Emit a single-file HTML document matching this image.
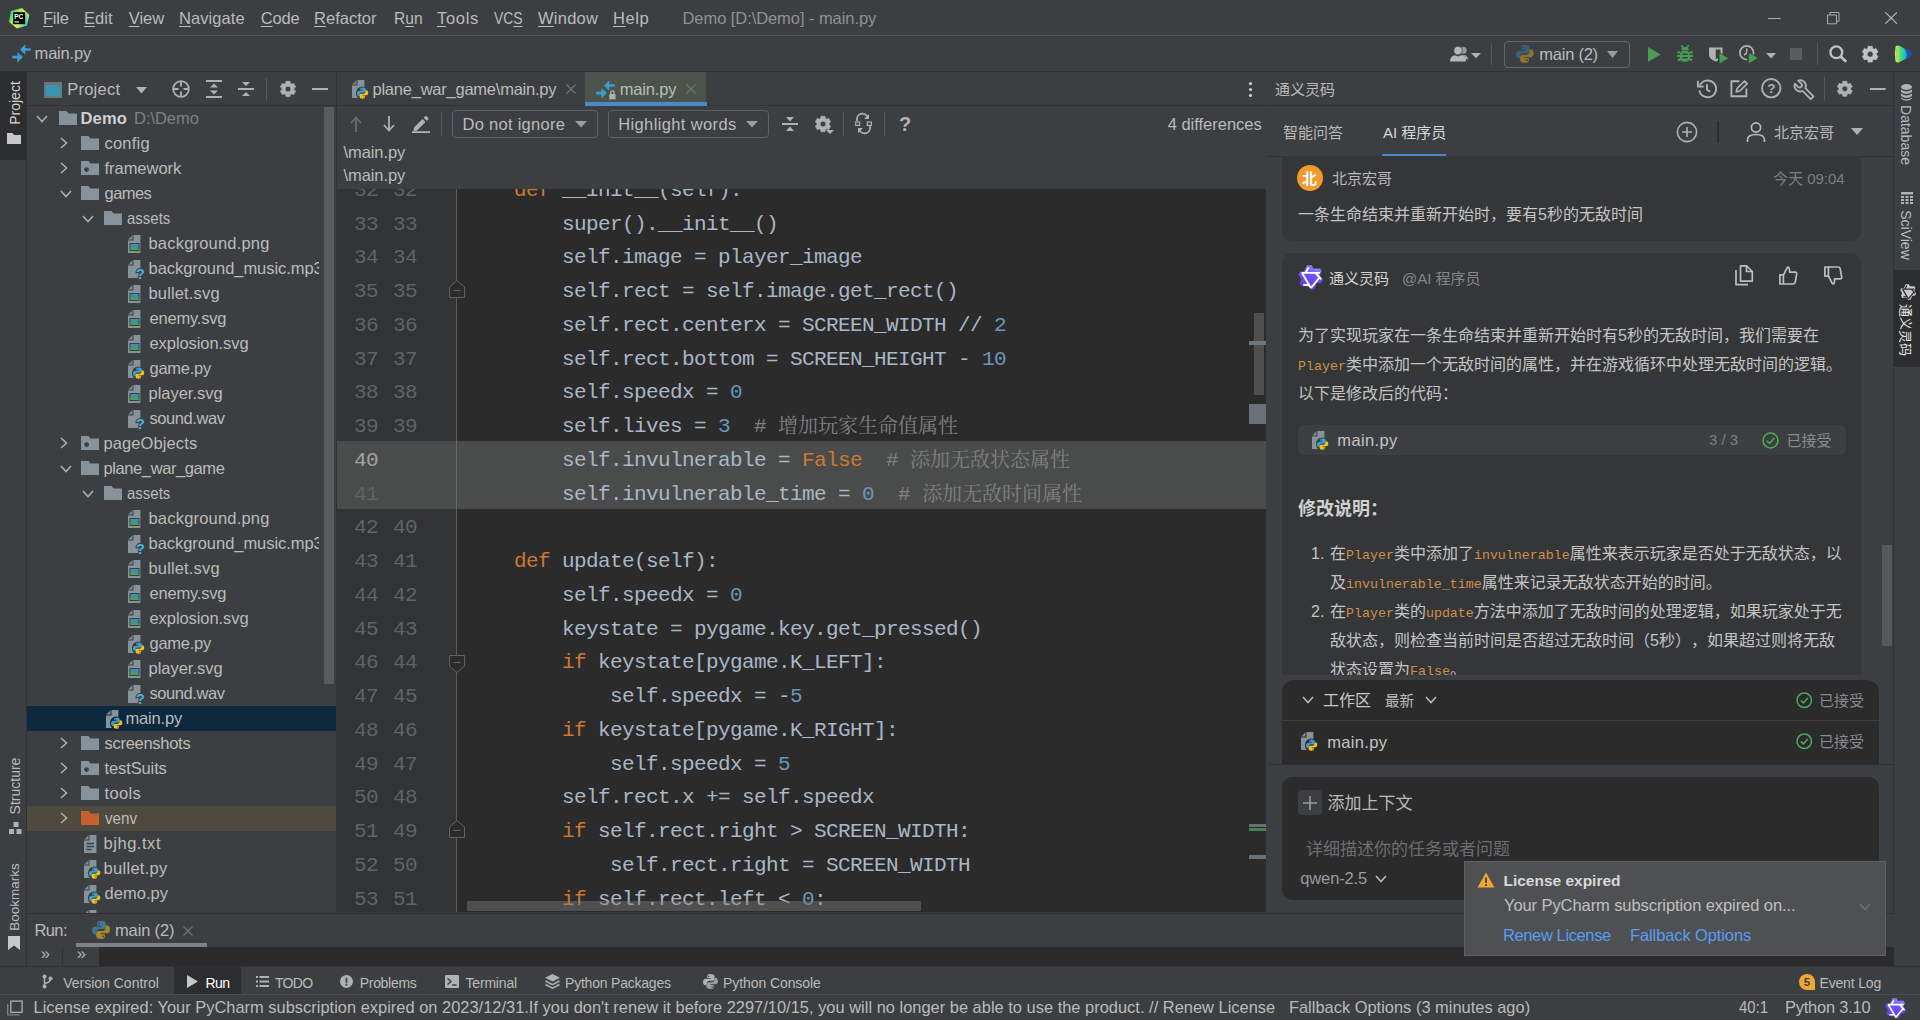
<!DOCTYPE html>
<html lang="zh"><head><meta charset="utf-8"><title>Demo - main.py</title>
<style>
*{box-sizing:border-box;margin:0;padding:0}
html,body{width:1920px;height:1020px;overflow:hidden;background:#3c3f41}
body{position:relative;font-family:"Liberation Sans","Noto Sans CJK SC",sans-serif;font-size:16.5px;color:#bbbbbb;-webkit-font-smoothing:antialiased;text-spacing-trim:space-all}
.abs{position:absolute}
.t{position:absolute;white-space:nowrap;line-height:20px;height:20px}
.hl{position:absolute;height:1px}
.vl{position:absolute;width:1px}
u{text-decoration:underline;text-underline-offset:2px;text-decoration-thickness:1px}
.mono{font-family:"Liberation Mono","Noto Serif CJK SC",monospace}
.code{position:absolute;left:467px;white-space:pre;font-family:"Liberation Mono","Noto Serif CJK SC",monospace;font-size:21px;letter-spacing:-0.6px;line-height:34px;height:34px;color:#a9b7c6}
.ln{position:absolute;white-space:pre;font-family:"Liberation Mono",monospace;font-size:21px;letter-spacing:-0.6px;line-height:34px;height:34px;color:#606366}
.kw{color:#cc7832}.nu{color:#6897bb}.cm{color:#808080}.cm i{font-style:normal;font-size:20px;letter-spacing:0;position:relative;top:1px}
.cjk{font-family:"Liberation Sans","Noto Sans CJK SC",sans-serif}
.row{position:absolute;left:27px;width:309px;height:25px}

.oc{color:#d0904a;font-family:"Liberation Mono",monospace;font-size:13.3px}
svg{position:absolute;overflow:visible}
</style></head><body>
<div class="abs" style="left:0px;top:72px;width:27px;height:894px;background:#3c3f41;"></div>
<div class="abs" style="left:0px;top:72px;width:26px;height:88px;background:#2b2d2e;"></div>
<div class="abs" style="left:26px;top:72px;width:1px;height:894px;background:#323232;"></div>
<div class="abs" style="left:14.5px;top:103px;width:0;height:0"><div style="position:absolute;white-space:nowrap;transform:translate(-50%,-50%) rotate(-90deg);font-size:14px;line-height:18px;color:#d4d4d4">Project</div></div>
<svg style="left:7px;top:133px" width="14" height="11" viewBox="0 0 14 11"><path d="M0 0H5.5L7 2H14V11H0Z" fill="#c8c8c8"/></svg>
<div class="abs" style="left:14.8px;top:786px;width:0;height:0"><div style="position:absolute;white-space:nowrap;transform:translate(-50%,-50%) rotate(-90deg);font-size:14px;line-height:18px;color:#bbbbbb">Structure</div></div>
<svg style="left:9px;top:822px" width="13" height="12" viewBox="0 0 13 12"><rect x="4.5" y="0" width="5" height="5" fill="#afb1b3"/><rect x="0" y="7" width="5" height="5" fill="#afb1b3"/><rect x="7.5" y="7" width="5" height="5" fill="#afb1b3"/></svg>
<div class="abs" style="left:14.8px;top:896.5px;width:0;height:0"><div style="position:absolute;white-space:nowrap;transform:translate(-50%,-50%) rotate(-90deg);font-size:13.5px;line-height:18px;color:#bbbbbb">Bookmarks</div></div>
<svg style="left:8px;top:936px" width="12" height="14" viewBox="0 0 12 14"><path d="M0 0H12V14L6 9.5L0 14Z" fill="#c8c8c8"/></svg>
<div class="abs" style="left:27px;top:105px;width:309px;height:1px;background:#323232;"></div>
<svg style="left:44px;top:82px" width="18" height="16" viewBox="0 0 18 16"><rect x="0.75" y="0.75" width="16.5" height="14.5" fill="#3d91b3" stroke="#6d7478" stroke-width="1.5"/><rect x="0" y="0" width="18" height="3" fill="#6d7478"/></svg>
<div class="t" style="left:67.2px;top:79px;letter-spacing:0.239px;font-size:16.5px">Project</div>
<svg style="left:135.5px;top:87px" width="11" height="6.5" viewBox="0 0 11 6.5"><path d="M0 0H11L5.5 6.5Z" fill="#afb1b3"/></svg>
<svg style="left:172px;top:80px" width="18" height="18" viewBox="0 0 18 18"><circle cx="9" cy="9" r="7.8" fill="none" stroke="#afb1b3" stroke-width="1.8"/><path d="M9 1V6.5M9 11.5V17M1 9H6.5M11.5 9H17" stroke="#afb1b3" stroke-width="1.8"/></svg>
<svg style="left:206px;top:80px" width="16" height="18" viewBox="0 0 16 18"><rect x="0" y="0" width="16" height="2" fill="#afb1b3"/><rect x="0" y="16" width="16" height="2" fill="#afb1b3"/><path d="M8 3.5L12 7.5H4Z M8 14.5L12 10.5H4Z" fill="#afb1b3"/></svg>
<svg style="left:238px;top:80px" width="16" height="18" viewBox="0 0 16 18"><rect x="0" y="8" width="16" height="2" fill="#afb1b3"/><path d="M8 6L12 2H4Z M8 12L12 16H4Z" fill="#afb1b3"/></svg>
<div class="abs" style="left:266px;top:78px;width:1px;height:23px;background:#555759;"></div>
<svg style="left:280px;top:81px" width="16" height="16" viewBox="0 0 16 16"><path d="M5.73 2.27L5.93 0.27L10.07 0.27L10.27 2.27L11.83 3.17L13.66 2.34L15.73 5.93L14.09 7.10L14.09 8.90L15.73 10.07L13.66 13.66L11.83 12.83L10.27 13.73L10.07 15.73L5.93 15.73L5.73 13.73L4.17 12.83L2.34 13.66L0.27 10.07L1.91 8.90L1.91 7.10L0.27 5.93L2.34 2.34L4.17 3.17ZM5.16 8.00a2.84 2.84 0 1 0 5.68 0a2.84 2.84 0 1 0 -5.68 0Z" fill="#afb1b3" fill-rule="evenodd" stroke="#afb1b3" stroke-width="0.6" stroke-linejoin="round"/></svg>
<svg style="left:312px;top:88px" width="16" height="2" viewBox="0 0 16 2"><rect width="16" height="2" fill="#afb1b3"/></svg>
<div class="abs" style="left:336px;top:72px;width:1px;height:841px;background:#323232;"></div>
<svg style="left:35.7px;top:114.5px" width="12" height="8" viewBox="0 0 12 8"><path d="M1 1L6 6.5L11 1" fill="none" stroke="#adadad" stroke-width="1.6"/></svg>
<svg style="left:59px;top:110.7px" width="18" height="14" viewBox="0 0 18 14"><path d="M0 0H7.5L9.5 2.5H18V14H0Z" fill="#87939a"/></svg>
<div class="t" style="left:80.5px;top:108px;letter-spacing:0.179px;font-size:16.5px;color:#d0d0d0"><b>Demo</b></div>
<div class="t" style="left:134px;top:108px;letter-spacing:-0.037px;font-size:16.5px;color:#7f8183">D:\Demo</div>
<svg style="left:59.8px;top:137px" width="8" height="12" viewBox="0 0 8 12"><path d="M1 1L6.5 6L1 11" fill="none" stroke="#adadad" stroke-width="1.6"/></svg>
<svg style="left:81px;top:135.7px" width="18" height="14" viewBox="0 0 18 14"><path d="M0 0H7.5L9.5 2.5H18V14H0Z" fill="#87939a"/></svg>
<div class="t" style="left:104.5px;top:133px;letter-spacing:0.209px;font-size:16.5px">config</div>
<svg style="left:59.8px;top:162px" width="8" height="12" viewBox="0 0 8 12"><path d="M1 1L6.5 6L1 11" fill="none" stroke="#adadad" stroke-width="1.6"/></svg>
<svg style="left:81px;top:160.7px" width="18" height="14" viewBox="0 0 18 14"><path d="M0 0H7.5L9.5 2.5H18V14H0Z" fill="#87939a"/><circle cx="5.6" cy="8.6" r="2.4" fill="#3c3f41"/></svg>
<div class="t" style="left:104.5px;top:158px;letter-spacing:-0.033px;font-size:16.5px">framework</div>
<svg style="left:59.5px;top:189.5px" width="12" height="8" viewBox="0 0 12 8"><path d="M1 1L6 6.5L11 1" fill="none" stroke="#adadad" stroke-width="1.6"/></svg>
<svg style="left:81px;top:185.7px" width="18" height="14" viewBox="0 0 18 14"><path d="M0 0H7.5L9.5 2.5H18V14H0Z" fill="#87939a"/></svg>
<div class="t" style="left:104.5px;top:183px;letter-spacing:-0.544px;font-size:16.5px">games</div>
<svg style="left:81.5px;top:214.5px" width="12" height="8" viewBox="0 0 12 8"><path d="M1 1L6 6.5L11 1" fill="none" stroke="#adadad" stroke-width="1.6"/></svg>
<svg style="left:104px;top:210.7px" width="18" height="14" viewBox="0 0 18 14"><path d="M0 0H7.5L9.5 2.5H18V14H0Z" fill="#87939a"/></svg>
<div class="t" style="left:126.5px;top:208px;transform:scaleX(0.9086);transform-origin:0 0;font-size:16.5px">assets</div>
<svg style="left:128px;top:234.5px" width="13" height="18" viewBox="0 0 13 18"><path d="M5.5 0H12.4V18H0V5.5Z" fill="#87939b"/><path d="M0 5.500L5.500 0V5.500Z" fill="#3c3f41"/><path d="M0.300 4.500L4.500 0.300V4.500Z" fill="#7e8991"/><rect x="1.5" y="8" width="10" height="8" fill="#3c3f41"/><rect x="2.5" y="9" width="8" height="6" fill="#3c8fb5"/><path d="M2.5 15V12.5Q5 10.5 7 12.5T10.5 13V15Z" fill="#4f9f49"/></svg>
<div class="t" style="left:148.5px;top:233px;letter-spacing:0.195px;font-size:16.5px">background.png</div>
<svg style="left:128px;top:259.5px" width="13" height="18" viewBox="0 0 13 18"><path d="M5.5 0H12.4V18H0V5.5Z" fill="#87939b"/><path d="M0 5.500L5.500 0V5.500Z" fill="#3c3f41"/><path d="M0.300 4.500L4.500 0.300V4.500Z" fill="#7e8991"/><text x="8.100" y="19" font-family="Liberation Sans,sans-serif" font-weight="bold" font-size="14.500" fill="#40b6e0" stroke="#3c3f41" stroke-width="2.200" paint-order="stroke">?</text></svg>
<div class="t" style="left:148.5px;top:258px;letter-spacing:-0.047px;font-size:16.5px;width:170px;overflow:hidden">background_music.mp3</div>
<svg style="left:128px;top:284.5px" width="13" height="18" viewBox="0 0 13 18"><path d="M5.5 0H12.4V18H0V5.5Z" fill="#87939b"/><path d="M0 5.500L5.500 0V5.500Z" fill="#3c3f41"/><path d="M0.300 4.500L4.500 0.300V4.500Z" fill="#7e8991"/><rect x="1.5" y="8" width="10" height="8" fill="#3c3f41"/><rect x="2.5" y="9" width="8" height="6" fill="#3c8fb5"/><path d="M2.5 15V12.5Q5 10.5 7 12.5T10.5 13V15Z" fill="#4f9f49"/></svg>
<div class="t" style="left:148.5px;top:283px;letter-spacing:0.152px;font-size:16.5px">bullet.svg</div>
<svg style="left:128px;top:309.5px" width="13" height="18" viewBox="0 0 13 18"><path d="M5.5 0H12.4V18H0V5.5Z" fill="#87939b"/><path d="M0 5.500L5.500 0V5.500Z" fill="#3c3f41"/><path d="M0.300 4.500L4.500 0.300V4.500Z" fill="#7e8991"/><rect x="1.5" y="8" width="10" height="8" fill="#3c3f41"/><rect x="2.5" y="9" width="8" height="6" fill="#3c8fb5"/><path d="M2.5 15V12.5Q5 10.5 7 12.5T10.5 13V15Z" fill="#4f9f49"/></svg>
<div class="t" style="left:149.5px;top:308px;letter-spacing:-0.198px;font-size:16.5px">enemy.svg</div>
<svg style="left:128px;top:334.5px" width="13" height="18" viewBox="0 0 13 18"><path d="M5.5 0H12.4V18H0V5.5Z" fill="#87939b"/><path d="M0 5.500L5.500 0V5.500Z" fill="#3c3f41"/><path d="M0.300 4.500L4.500 0.300V4.500Z" fill="#7e8991"/><rect x="1.5" y="8" width="10" height="8" fill="#3c3f41"/><rect x="2.5" y="9" width="8" height="6" fill="#3c8fb5"/><path d="M2.5 15V12.5Q5 10.5 7 12.5T10.5 13V15Z" fill="#4f9f49"/></svg>
<div class="t" style="left:149.5px;top:333px;letter-spacing:-0.075px;font-size:16.5px">explosion.svg</div>
<svg style="left:128px;top:359.5px" width="17" height="20" viewBox="0 0 17 20"><path d="M5.5 0H12.4V18H0V5.5Z" fill="#87939b"/><path d="M0 5.500L5.500 0V5.500Z" fill="#3c3f41"/><path d="M0.300 4.500L4.500 0.300V4.500Z" fill="#7e8991"/><circle cx="10.5" cy="13" r="6.6" fill="#3c3f41"/><g transform="translate(5,7.5) scale(0.94)"><path d="M5.9 0C3.6 0 3.4 1 3.4 1.8V3.2H6.1V3.8H2C0.8 3.8 0 4.8 0 6.4S0.8 9 2 9H3V7.4C3 6.3 3.9 5.4 5 5.4H7.6C8.5 5.4 9.2 4.7 9.2 3.8V1.8C9.2 0.8 8.3 0 5.9 0Z" fill="#3b9fd6"/><path d="M6.1 12C8.4 12 8.6 11 8.6 10.2V8.8H5.9V8.2H10C11.2 8.2 12 7.2 12 5.6S11.2 3 10 3H9V4.6C9 5.7 8.1 6.6 7 6.6H4.4C3.5 6.6 2.8 7.3 2.8 8.2V10.2C2.8 11.2 3.7 12 6.1 12Z" fill="#f2c21b"/><circle cx="4.6" cy="1.7" r="0.6" fill="#3c3f41"/><circle cx="7.4" cy="10.3" r="0.6" fill="#3c3f41"/></g></svg>
<div class="t" style="left:149.5px;top:358px;letter-spacing:-0.256px;font-size:16.5px">game.py</div>
<svg style="left:128px;top:384.5px" width="13" height="18" viewBox="0 0 13 18"><path d="M5.5 0H12.4V18H0V5.5Z" fill="#87939b"/><path d="M0 5.500L5.500 0V5.500Z" fill="#3c3f41"/><path d="M0.300 4.500L4.500 0.300V4.500Z" fill="#7e8991"/><rect x="1.5" y="8" width="10" height="8" fill="#3c3f41"/><rect x="2.5" y="9" width="8" height="6" fill="#3c8fb5"/><path d="M2.5 15V12.5Q5 10.5 7 12.5T10.5 13V15Z" fill="#4f9f49"/></svg>
<div class="t" style="left:148.5px;top:383px;letter-spacing:-0.024px;font-size:16.5px">player.svg</div>
<svg style="left:128px;top:409.5px" width="13" height="18" viewBox="0 0 13 18"><path d="M5.5 0H12.4V18H0V5.5Z" fill="#87939b"/><path d="M0 5.500L5.500 0V5.500Z" fill="#3c3f41"/><path d="M0.300 4.500L4.500 0.300V4.500Z" fill="#7e8991"/><text x="8.100" y="19" font-family="Liberation Sans,sans-serif" font-weight="bold" font-size="14.500" fill="#40b6e0" stroke="#3c3f41" stroke-width="2.200" paint-order="stroke">?</text></svg>
<div class="t" style="left:149.5px;top:408px;letter-spacing:-0.429px;font-size:16.5px">sound.wav</div>
<svg style="left:59.8px;top:437px" width="8" height="12" viewBox="0 0 8 12"><path d="M1 1L6.5 6L1 11" fill="none" stroke="#adadad" stroke-width="1.6"/></svg>
<svg style="left:81px;top:435.7px" width="18" height="14" viewBox="0 0 18 14"><path d="M0 0H7.5L9.5 2.5H18V14H0Z" fill="#87939a"/><circle cx="5.6" cy="8.6" r="2.4" fill="#3c3f41"/></svg>
<div class="t" style="left:103.5px;top:433px;letter-spacing:0.101px;font-size:16.5px">pageObjects</div>
<svg style="left:59.5px;top:464.5px" width="12" height="8" viewBox="0 0 12 8"><path d="M1 1L6 6.5L11 1" fill="none" stroke="#adadad" stroke-width="1.6"/></svg>
<svg style="left:81px;top:460.7px" width="18" height="14" viewBox="0 0 18 14"><path d="M0 0H7.5L9.5 2.5H18V14H0Z" fill="#87939a"/></svg>
<div class="t" style="left:103.5px;top:458px;letter-spacing:-0.401px;font-size:16.5px">plane_war_game</div>
<svg style="left:81.5px;top:489.5px" width="12" height="8" viewBox="0 0 12 8"><path d="M1 1L6 6.5L11 1" fill="none" stroke="#adadad" stroke-width="1.6"/></svg>
<svg style="left:104px;top:485.7px" width="18" height="14" viewBox="0 0 18 14"><path d="M0 0H7.5L9.5 2.5H18V14H0Z" fill="#87939a"/></svg>
<div class="t" style="left:126.5px;top:483px;transform:scaleX(0.9086);transform-origin:0 0;font-size:16.5px">assets</div>
<svg style="left:128px;top:509.5px" width="13" height="18" viewBox="0 0 13 18"><path d="M5.5 0H12.4V18H0V5.5Z" fill="#87939b"/><path d="M0 5.500L5.500 0V5.500Z" fill="#3c3f41"/><path d="M0.300 4.500L4.500 0.300V4.500Z" fill="#7e8991"/><rect x="1.5" y="8" width="10" height="8" fill="#3c3f41"/><rect x="2.5" y="9" width="8" height="6" fill="#3c8fb5"/><path d="M2.5 15V12.5Q5 10.5 7 12.5T10.5 13V15Z" fill="#4f9f49"/></svg>
<div class="t" style="left:148.5px;top:508px;letter-spacing:0.195px;font-size:16.5px">background.png</div>
<svg style="left:128px;top:534.5px" width="13" height="18" viewBox="0 0 13 18"><path d="M5.5 0H12.4V18H0V5.5Z" fill="#87939b"/><path d="M0 5.500L5.500 0V5.500Z" fill="#3c3f41"/><path d="M0.300 4.500L4.500 0.300V4.500Z" fill="#7e8991"/><text x="8.100" y="19" font-family="Liberation Sans,sans-serif" font-weight="bold" font-size="14.500" fill="#40b6e0" stroke="#3c3f41" stroke-width="2.200" paint-order="stroke">?</text></svg>
<div class="t" style="left:148.5px;top:533px;letter-spacing:-0.047px;font-size:16.5px;width:170px;overflow:hidden">background_music.mp3</div>
<svg style="left:128px;top:559.5px" width="13" height="18" viewBox="0 0 13 18"><path d="M5.5 0H12.4V18H0V5.5Z" fill="#87939b"/><path d="M0 5.500L5.500 0V5.500Z" fill="#3c3f41"/><path d="M0.300 4.500L4.500 0.300V4.500Z" fill="#7e8991"/><rect x="1.5" y="8" width="10" height="8" fill="#3c3f41"/><rect x="2.5" y="9" width="8" height="6" fill="#3c8fb5"/><path d="M2.5 15V12.5Q5 10.5 7 12.5T10.5 13V15Z" fill="#4f9f49"/></svg>
<div class="t" style="left:148.5px;top:558px;letter-spacing:0.152px;font-size:16.5px">bullet.svg</div>
<svg style="left:128px;top:584.5px" width="13" height="18" viewBox="0 0 13 18"><path d="M5.5 0H12.4V18H0V5.5Z" fill="#87939b"/><path d="M0 5.500L5.500 0V5.500Z" fill="#3c3f41"/><path d="M0.300 4.500L4.500 0.300V4.500Z" fill="#7e8991"/><rect x="1.5" y="8" width="10" height="8" fill="#3c3f41"/><rect x="2.5" y="9" width="8" height="6" fill="#3c8fb5"/><path d="M2.5 15V12.5Q5 10.5 7 12.5T10.5 13V15Z" fill="#4f9f49"/></svg>
<div class="t" style="left:149.5px;top:583px;letter-spacing:-0.198px;font-size:16.5px">enemy.svg</div>
<svg style="left:128px;top:609.5px" width="13" height="18" viewBox="0 0 13 18"><path d="M5.5 0H12.4V18H0V5.5Z" fill="#87939b"/><path d="M0 5.500L5.500 0V5.500Z" fill="#3c3f41"/><path d="M0.300 4.500L4.500 0.300V4.500Z" fill="#7e8991"/><rect x="1.5" y="8" width="10" height="8" fill="#3c3f41"/><rect x="2.5" y="9" width="8" height="6" fill="#3c8fb5"/><path d="M2.5 15V12.5Q5 10.5 7 12.5T10.5 13V15Z" fill="#4f9f49"/></svg>
<div class="t" style="left:149.5px;top:608px;letter-spacing:-0.075px;font-size:16.5px">explosion.svg</div>
<svg style="left:128px;top:634.5px" width="17" height="20" viewBox="0 0 17 20"><path d="M5.5 0H12.4V18H0V5.5Z" fill="#87939b"/><path d="M0 5.500L5.500 0V5.500Z" fill="#3c3f41"/><path d="M0.300 4.500L4.500 0.300V4.500Z" fill="#7e8991"/><circle cx="10.5" cy="13" r="6.6" fill="#3c3f41"/><g transform="translate(5,7.5) scale(0.94)"><path d="M5.9 0C3.6 0 3.4 1 3.4 1.8V3.2H6.1V3.8H2C0.8 3.8 0 4.8 0 6.4S0.8 9 2 9H3V7.4C3 6.3 3.9 5.4 5 5.4H7.6C8.5 5.4 9.2 4.7 9.2 3.8V1.8C9.2 0.8 8.3 0 5.9 0Z" fill="#3b9fd6"/><path d="M6.1 12C8.4 12 8.6 11 8.6 10.2V8.8H5.9V8.2H10C11.2 8.2 12 7.2 12 5.6S11.2 3 10 3H9V4.6C9 5.7 8.1 6.6 7 6.6H4.4C3.5 6.6 2.8 7.3 2.8 8.2V10.2C2.8 11.2 3.7 12 6.1 12Z" fill="#f2c21b"/><circle cx="4.6" cy="1.7" r="0.6" fill="#3c3f41"/><circle cx="7.4" cy="10.3" r="0.6" fill="#3c3f41"/></g></svg>
<div class="t" style="left:149.5px;top:633px;letter-spacing:-0.256px;font-size:16.5px">game.py</div>
<svg style="left:128px;top:659.5px" width="13" height="18" viewBox="0 0 13 18"><path d="M5.5 0H12.4V18H0V5.5Z" fill="#87939b"/><path d="M0 5.500L5.500 0V5.500Z" fill="#3c3f41"/><path d="M0.300 4.500L4.500 0.300V4.500Z" fill="#7e8991"/><rect x="1.5" y="8" width="10" height="8" fill="#3c3f41"/><rect x="2.5" y="9" width="8" height="6" fill="#3c8fb5"/><path d="M2.5 15V12.5Q5 10.5 7 12.5T10.5 13V15Z" fill="#4f9f49"/></svg>
<div class="t" style="left:148.5px;top:658px;letter-spacing:-0.024px;font-size:16.5px">player.svg</div>
<svg style="left:128px;top:684.5px" width="13" height="18" viewBox="0 0 13 18"><path d="M5.5 0H12.4V18H0V5.5Z" fill="#87939b"/><path d="M0 5.500L5.500 0V5.500Z" fill="#3c3f41"/><path d="M0.300 4.500L4.500 0.300V4.500Z" fill="#7e8991"/><text x="8.100" y="19" font-family="Liberation Sans,sans-serif" font-weight="bold" font-size="14.500" fill="#40b6e0" stroke="#3c3f41" stroke-width="2.200" paint-order="stroke">?</text></svg>
<div class="t" style="left:149.5px;top:683px;letter-spacing:-0.429px;font-size:16.5px">sound.wav</div>
<div class="abs" style="left:27px;top:706px;width:309px;height:25px;background:#0d293e;"></div>
<svg style="left:106px;top:709.5px" width="17" height="20" viewBox="0 0 17 20"><path d="M5.5 0H12.4V18H0V5.5Z" fill="#87939b"/><path d="M0 5.500L5.500 0V5.500Z" fill="#0d293e"/><path d="M0.300 4.500L4.500 0.300V4.500Z" fill="#7e8991"/><circle cx="10.5" cy="13" r="6.6" fill="#0d293e"/><g transform="translate(5,7.5) scale(0.94)"><path d="M5.9 0C3.6 0 3.4 1 3.4 1.8V3.2H6.1V3.8H2C0.8 3.8 0 4.8 0 6.4S0.8 9 2 9H3V7.4C3 6.3 3.9 5.4 5 5.4H7.6C8.5 5.4 9.2 4.7 9.2 3.8V1.8C9.2 0.8 8.3 0 5.9 0Z" fill="#3b9fd6"/><path d="M6.1 12C8.4 12 8.6 11 8.6 10.2V8.8H5.9V8.2H10C11.2 8.2 12 7.2 12 5.6S11.2 3 10 3H9V4.6C9 5.7 8.1 6.6 7 6.6H4.4C3.5 6.6 2.8 7.3 2.8 8.2V10.2C2.8 11.2 3.7 12 6.1 12Z" fill="#f2c21b"/><circle cx="4.6" cy="1.7" r="0.6" fill="#3c3f41"/><circle cx="7.4" cy="10.3" r="0.6" fill="#3c3f41"/></g></svg>
<div class="t" style="left:125.5px;top:708px;letter-spacing:-0.187px;font-size:16.5px">main.py</div>
<svg style="left:59.8px;top:737px" width="8" height="12" viewBox="0 0 8 12"><path d="M1 1L6.5 6L1 11" fill="none" stroke="#adadad" stroke-width="1.6"/></svg>
<svg style="left:81px;top:735.7px" width="18" height="14" viewBox="0 0 18 14"><path d="M0 0H7.5L9.5 2.5H18V14H0Z" fill="#87939a"/></svg>
<div class="t" style="left:104.5px;top:733px;letter-spacing:-0.281px;font-size:16.5px">screenshots</div>
<svg style="left:59.8px;top:762px" width="8" height="12" viewBox="0 0 8 12"><path d="M1 1L6.5 6L1 11" fill="none" stroke="#adadad" stroke-width="1.6"/></svg>
<svg style="left:81px;top:760.7px" width="18" height="14" viewBox="0 0 18 14"><path d="M0 0H7.5L9.5 2.5H18V14H0Z" fill="#87939a"/><circle cx="5.6" cy="8.6" r="2.4" fill="#3c3f41"/></svg>
<div class="t" style="left:104.5px;top:758px;letter-spacing:-0.116px;font-size:16.5px">testSuits</div>
<svg style="left:59.8px;top:787px" width="8" height="12" viewBox="0 0 8 12"><path d="M1 1L6.5 6L1 11" fill="none" stroke="#adadad" stroke-width="1.6"/></svg>
<svg style="left:81px;top:785.7px" width="18" height="14" viewBox="0 0 18 14"><path d="M0 0H7.5L9.5 2.5H18V14H0Z" fill="#87939a"/></svg>
<div class="t" style="left:104.5px;top:783px;letter-spacing:0.349px;font-size:16.5px">tools</div>
<div class="abs" style="left:27px;top:806px;width:309px;height:25px;background:#4e4a40;"></div>
<svg style="left:59.8px;top:812px" width="8" height="12" viewBox="0 0 8 12"><path d="M1 1L6.5 6L1 11" fill="none" stroke="#adadad" stroke-width="1.6"/></svg>
<svg style="left:81px;top:810.7px" width="18" height="14" viewBox="0 0 18 14"><path d="M0 0H7.5L9.5 2.5H18V14H0Z" fill="#c75f2f"/></svg>
<div class="t" style="left:104.5px;top:808px;transform:scaleX(0.9241);transform-origin:0 0;font-size:16.5px">venv</div>
<svg style="left:83.5px;top:834.5px" width="13" height="18" viewBox="0 0 13 18"><path d="M5.5 0H12.4V18H0V5.5Z" fill="#87939b"/><path d="M0 5.500L5.500 0V5.500Z" fill="#3c3f41"/><path d="M0.300 4.500L4.500 0.300V4.500Z" fill="#7e8991"/><path d="M2.5 8.5H10M2.5 11.5H10M2.5 14.5H7.5" stroke="#3c3f41" stroke-width="1.3"/></svg>
<div class="t" style="left:103.5px;top:833px;letter-spacing:0.541px;font-size:16.5px">bjhg.txt</div>
<svg style="left:83.5px;top:859.5px" width="17" height="20" viewBox="0 0 17 20"><path d="M5.5 0H12.4V18H0V5.5Z" fill="#87939b"/><path d="M0 5.500L5.500 0V5.500Z" fill="#3c3f41"/><path d="M0.300 4.500L4.500 0.300V4.500Z" fill="#7e8991"/><circle cx="10.5" cy="13" r="6.6" fill="#3c3f41"/><g transform="translate(5,7.5) scale(0.94)"><path d="M5.9 0C3.6 0 3.4 1 3.4 1.8V3.2H6.1V3.8H2C0.8 3.8 0 4.8 0 6.4S0.8 9 2 9H3V7.4C3 6.3 3.9 5.4 5 5.4H7.6C8.5 5.4 9.2 4.7 9.2 3.8V1.8C9.2 0.8 8.3 0 5.9 0Z" fill="#3b9fd6"/><path d="M6.1 12C8.4 12 8.6 11 8.6 10.2V8.8H5.9V8.2H10C11.2 8.2 12 7.2 12 5.6S11.2 3 10 3H9V4.6C9 5.7 8.1 6.6 7 6.6H4.4C3.5 6.6 2.8 7.3 2.8 8.2V10.2C2.8 11.2 3.7 12 6.1 12Z" fill="#f2c21b"/><circle cx="4.6" cy="1.7" r="0.6" fill="#3c3f41"/><circle cx="7.4" cy="10.3" r="0.6" fill="#3c3f41"/></g></svg>
<div class="t" style="left:103.5px;top:858px;letter-spacing:0.299px;font-size:16.5px">bullet.py</div>
<svg style="left:83.5px;top:884.5px" width="17" height="20" viewBox="0 0 17 20"><path d="M5.5 0H12.4V18H0V5.5Z" fill="#87939b"/><path d="M0 5.500L5.500 0V5.500Z" fill="#3c3f41"/><path d="M0.300 4.500L4.500 0.300V4.500Z" fill="#7e8991"/><circle cx="10.5" cy="13" r="6.6" fill="#3c3f41"/><g transform="translate(5,7.5) scale(0.94)"><path d="M5.9 0C3.6 0 3.4 1 3.4 1.8V3.2H6.1V3.8H2C0.8 3.8 0 4.8 0 6.4S0.8 9 2 9H3V7.4C3 6.3 3.9 5.4 5 5.4H7.6C8.5 5.4 9.2 4.7 9.2 3.8V1.8C9.2 0.8 8.3 0 5.9 0Z" fill="#3b9fd6"/><path d="M6.1 12C8.4 12 8.6 11 8.6 10.2V8.8H5.9V8.2H10C11.2 8.2 12 7.2 12 5.6S11.2 3 10 3H9V4.6C9 5.7 8.1 6.6 7 6.6H4.4C3.5 6.6 2.8 7.3 2.8 8.2V10.2C2.8 11.2 3.7 12 6.1 12Z" fill="#f2c21b"/><circle cx="4.6" cy="1.7" r="0.6" fill="#3c3f41"/><circle cx="7.4" cy="10.3" r="0.6" fill="#3c3f41"/></g></svg>
<div class="t" style="left:104.5px;top:883px;letter-spacing:0.044px;font-size:16.5px">demo.py</div>
<svg style="left:83.5px;top:909.5px" width="17" height="20" viewBox="0 0 17 20"><path d="M5.5 0H12.4V18H0V5.5Z" fill="#87939b"/><path d="M0 5.500L5.500 0V5.500Z" fill="#3c3f41"/><path d="M0.300 4.500L4.500 0.300V4.500Z" fill="#7e8991"/><circle cx="10.5" cy="13" r="6.6" fill="#3c3f41"/><g transform="translate(5,7.5) scale(0.94)"><path d="M5.9 0C3.6 0 3.4 1 3.4 1.8V3.2H6.1V3.8H2C0.8 3.8 0 4.8 0 6.4S0.8 9 2 9H3V7.4C3 6.3 3.9 5.4 5 5.4H7.6C8.5 5.4 9.2 4.7 9.2 3.8V1.8C9.2 0.8 8.3 0 5.9 0Z" fill="#3b9fd6"/><path d="M6.1 12C8.4 12 8.6 11 8.6 10.2V8.8H5.9V8.2H10C11.2 8.2 12 7.2 12 5.6S11.2 3 10 3H9V4.6C9 5.7 8.1 6.6 7 6.6H4.4C3.5 6.6 2.8 7.3 2.8 8.2V10.2C2.8 11.2 3.7 12 6.1 12Z" fill="#f2c21b"/><circle cx="4.6" cy="1.7" r="0.6" fill="#3c3f41"/><circle cx="7.4" cy="10.3" r="0.6" fill="#3c3f41"/></g></svg>
<div class="abs" style="left:324.2px;top:107px;width:10px;height:577px;background:#595b5d;"></div>
<div class="abs" style="left:337px;top:105px;width:930px;height:1px;background:#323232;"></div>
<svg style="left:352px;top:80px" width="17" height="20" viewBox="0 0 17 20"><path d="M5.5 0H12.4V18H0V5.5Z" fill="#87939b"/><path d="M0 5.500L5.500 0V5.500Z" fill="#3c3f41"/><path d="M0.300 4.500L4.500 0.300V4.500Z" fill="#7e8991"/><circle cx="10.5" cy="13" r="6.6" fill="#3c3f41"/><g transform="translate(5,7.5) scale(0.94)"><path d="M5.9 0C3.6 0 3.4 1 3.4 1.8V3.2H6.1V3.8H2C0.8 3.8 0 4.8 0 6.4S0.8 9 2 9H3V7.4C3 6.3 3.9 5.4 5 5.4H7.6C8.5 5.4 9.2 4.7 9.2 3.8V1.8C9.2 0.8 8.3 0 5.9 0Z" fill="#3b9fd6"/><path d="M6.1 12C8.4 12 8.6 11 8.6 10.2V8.8H5.9V8.2H10C11.2 8.2 12 7.2 12 5.6S11.2 3 10 3H9V4.6C9 5.7 8.1 6.6 7 6.6H4.4C3.5 6.6 2.8 7.3 2.8 8.2V10.2C2.8 11.2 3.7 12 6.1 12Z" fill="#f2c21b"/><circle cx="4.6" cy="1.7" r="0.6" fill="#3c3f41"/><circle cx="7.4" cy="10.3" r="0.6" fill="#3c3f41"/></g></svg>
<div class="t" style="left:372.5px;top:79px;letter-spacing:-0.235px;font-size:16.5px">plane_war_game\main.py</div>
<svg style="left:566px;top:84px" width="10" height="10" viewBox="0 0 10 10"><path d="M0.5 0.5L9.5 9.5M9.5 0.5L0.5 9.5" stroke="#6e7073" stroke-width="1.3"/></svg>
<div class="abs" style="left:585px;top:72px;width:121px;height:33px;background:#4b534a;"></div>
<div class="abs" style="left:585px;top:102px;width:122px;height:4px;background:#4a88c7;"></div>
<svg style="left:595.5px;top:79.5px" width="21" height="20" viewBox="0 0 21 20"><path d="M0.300 11.800H5.400V8.200L10.900 13.100L5.400 18.400V14.400H0.300Z" fill="#3a9fd5"/><path d="M18.700 4.150H13.300V0.300L8.100 5.800L13.300 10.700V6.700H18.700Z" fill="#3a9fd5"/><rect x="12.3" y="10" width="8.2" height="10.3" fill="#4b534a"/><rect x="13.3" y="14" width="6.2" height="5.3" fill="#afb1b3"/><path d="M14.7 14V12.6A1.7 1.7 0 0 1 18.1 12.6V14" stroke="#afb1b3" stroke-width="1.2" fill="none"/></svg>
<div class="t" style="left:619.8px;top:79px;letter-spacing:-0.179px;font-size:16.5px">main.py</div>
<svg style="left:686px;top:84px" width="10" height="10" viewBox="0 0 10 10"><path d="M0.5 0.5L9.5 9.5M9.5 0.5L0.5 9.5" stroke="#6e7073" stroke-width="1.3"/></svg>
<svg style="left:1249px;top:82px" width="3" height="15" viewBox="0 0 3 15"><circle cx="1.5" cy="1.6" r="1.6" fill="#c4c6c7"/><circle cx="1.5" cy="7.5" r="1.6" fill="#c4c6c7"/><circle cx="1.5" cy="13.4" r="1.6" fill="#c4c6c7"/></svg>
<svg style="left:350px;top:116px" width="12" height="16" viewBox="0 0 12 16"><path d="M6 16V2M1 7L6 1.5L11 7" stroke="#6a6c6e" stroke-width="1.8" fill="none"/></svg>
<svg style="left:383px;top:116px" width="12" height="16" viewBox="0 0 12 16"><path d="M6 0V14M1 9L6 14.5L11 9" stroke="#afb1b3" stroke-width="1.8" fill="none"/></svg>
<svg style="left:412px;top:115px" width="19" height="18" viewBox="0 0 19 18"><path d="M2 12.5L10.5 4L13.5 7L5 15.5L1.5 16Z M11.7 2.8L13.2 1.3Q14 0.6 14.8 1.4L16.2 2.8Q17 3.6 16.2 4.4L14.7 5.8Z" fill="#afb1b3"/><rect x="0" y="16.2" width="18" height="1.8" fill="#afb1b3"/></svg>
<div class="abs" style="left:441px;top:112px;width:1px;height:24px;background:#555759;"></div>
<div class="abs" style="left:452px;top:110px;width:146px;height:28px;border:1px solid #5e6062;border-radius:4px"></div>
<div class="t" style="left:462.5px;top:114px;letter-spacing:0.28px;font-size:16.5px">Do not ignore</div>
<svg style="left:575px;top:121px" width="12" height="6.5" viewBox="0 0 12 6.5"><path d="M0 0H12L6.0 6.5Z" fill="#9a9c9e"/></svg>
<div class="abs" style="left:608px;top:110px;width:161px;height:28px;border:1px solid #5e6062;border-radius:4px"></div>
<div class="t" style="left:618.25px;top:114px;letter-spacing:0.371px;font-size:16.5px">Highlight words</div>
<svg style="left:746px;top:121px" width="12" height="6.5" viewBox="0 0 12 6.5"><path d="M0 0H12L6.0 6.5Z" fill="#9a9c9e"/></svg>
<svg style="left:782px;top:116px" width="16" height="16" viewBox="0 0 16 16"><rect x="0" y="7" width="16" height="2" fill="#afb1b3"/><path d="M8 5.5L12 1H4Z M8 10.5L12 15H4Z" fill="#afb1b3"/></svg>
<svg style="left:814.5px;top:116px" width="16" height="16" viewBox="0 0 16 16"><path d="M5.73 2.27L5.93 0.27L10.07 0.27L10.27 2.27L11.83 3.17L13.66 2.34L15.73 5.93L14.09 7.10L14.09 8.90L15.73 10.07L13.66 13.66L11.83 12.83L10.27 13.73L10.07 15.73L5.93 15.73L5.73 13.73L4.17 12.83L2.34 13.66L0.27 10.07L1.91 8.90L1.91 7.10L0.27 5.93L2.34 2.34L4.17 3.17ZM5.16 8.00a2.84 2.84 0 1 0 5.68 0a2.84 2.84 0 1 0 -5.68 0Z" fill="#afb1b3" fill-rule="evenodd" stroke="#afb1b3" stroke-width="0.6" stroke-linejoin="round"/></svg>
<svg style="left:826px;top:130px" width="8" height="4" viewBox="0 0 8 4"><path d="M0 0H8L4 4Z" fill="#afb1b3"/></svg>
<div class="abs" style="left:843px;top:112px;width:1px;height:24px;background:#555759;"></div>
<svg style="left:855px;top:114px" width="17" height="19" viewBox="0 0 17 19"><path d="M2 7V6A5.5 5.5 0 0 1 12.5 3M15 12V13A5.5 5.5 0 0 1 4.5 16" fill="none" stroke="#afb1b3" stroke-width="1.7"/><path d="M14 0V5H9Z M3 19V14H8Z" fill="#afb1b3"/><rect x="0.7" y="8" width="4" height="3.4" fill="none" stroke="#afb1b3" stroke-width="1.2"/><rect x="12.3" y="8" width="4" height="3.4" fill="none" stroke="#afb1b3" stroke-width="1.2"/></svg>
<div class="abs" style="left:884px;top:112px;width:1px;height:24px;background:#555759;"></div>
<div class="t" style="left:899px;top:113px;font-size:20px;line-height:22px;height:22px;color:#afb1b3"><b>?</b></div>
<div class="t" style="left:1167.7px;top:114px;letter-spacing:-0.01px;font-size:16.5px">4 differences</div>
<div class="t" style="left:343.5px;top:142px;letter-spacing:-0.087px;font-size:16.5px">\main.py</div>
<div class="t" style="left:343.5px;top:165px;letter-spacing:-0.087px;font-size:16.5px">\main.py</div>
<div class="abs" style="left:337px;top:189px;width:929px;height:723px;background:#2b2b2b;overflow:hidden">
<div class="abs" style="left:0;top:0;width:120px;height:724px;background:#313335"></div>
<div class="abs" style="left:0;top:252px;width:930px;height:67.5px;background:#4a4c4c"></div>
<div class="abs" style="left:119px;top:0;width:1px;height:724px;background:#5a5c5e"></div>
<div class="abs" style="left:119px;top:252px;width:1px;height:67.5px;background:#646668"></div>
<div class="ln" style="left:17px;top:-15.250000000000002px;color:#606366">32</div>
<div class="ln" style="left:56px;top:-15.250000000000002px">32</div>
<div class="code" style="left:129px;top:-15.250000000000002px">    <span class="kw">def</span> __init__(self):</div>
<div class="ln" style="left:17px;top:18.5px;color:#606366">33</div>
<div class="ln" style="left:56px;top:18.5px">33</div>
<div class="code" style="left:129px;top:18.5px">        super().__init__()</div>
<div class="ln" style="left:17px;top:52.25px;color:#606366">34</div>
<div class="ln" style="left:56px;top:52.25px">34</div>
<div class="code" style="left:129px;top:52.25px">        self.image = player_image</div>
<div class="ln" style="left:17px;top:86.0px;color:#606366">35</div>
<div class="ln" style="left:56px;top:86.0px">35</div>
<div class="code" style="left:129px;top:86.0px">        self.rect = self.image.get_rect()</div>
<div class="ln" style="left:17px;top:119.75px;color:#606366">36</div>
<div class="ln" style="left:56px;top:119.75px">36</div>
<div class="code" style="left:129px;top:119.75px">        self.rect.centerx = SCREEN_WIDTH // <span class="nu">2</span></div>
<div class="ln" style="left:17px;top:153.5px;color:#606366">37</div>
<div class="ln" style="left:56px;top:153.5px">37</div>
<div class="code" style="left:129px;top:153.5px">        self.rect.bottom = SCREEN_HEIGHT - <span class="nu">10</span></div>
<div class="ln" style="left:17px;top:187.25px;color:#606366">38</div>
<div class="ln" style="left:56px;top:187.25px">38</div>
<div class="code" style="left:129px;top:187.25px">        self.speedx = <span class="nu">0</span></div>
<div class="ln" style="left:17px;top:221.0px;color:#606366">39</div>
<div class="ln" style="left:56px;top:221.0px">39</div>
<div class="code" style="left:129px;top:221.0px">        self.lives = <span class="nu">3</span>  <span class="cm"># <i>增加玩家生命值属性</i></span></div>
<div class="ln" style="left:17px;top:254.75px;color:#a4a3a3">40</div>
<div class="code" style="left:129px;top:254.75px">        self.invulnerable = <span class="kw">False</span>  <span class="cm"># <i>添加无敌状态属性</i></span></div>
<div class="ln" style="left:17px;top:288.5px;color:#606366">41</div>
<div class="code" style="left:129px;top:288.5px">        self.invulnerable_time = <span class="nu">0</span>  <span class="cm"># <i>添加无敌时间属性</i></span></div>
<div class="ln" style="left:17px;top:322.25px;color:#606366">42</div>
<div class="ln" style="left:56px;top:322.25px">40</div>
<div class="ln" style="left:17px;top:356.0px;color:#606366">43</div>
<div class="ln" style="left:56px;top:356.0px">41</div>
<div class="code" style="left:129px;top:356.0px">    <span class="kw">def</span> update(self):</div>
<div class="ln" style="left:17px;top:389.75px;color:#606366">44</div>
<div class="ln" style="left:56px;top:389.75px">42</div>
<div class="code" style="left:129px;top:389.75px">        self.speedx = <span class="nu">0</span></div>
<div class="ln" style="left:17px;top:423.5px;color:#606366">45</div>
<div class="ln" style="left:56px;top:423.5px">43</div>
<div class="code" style="left:129px;top:423.5px">        keystate = pygame.key.get_pressed()</div>
<div class="ln" style="left:17px;top:457.25px;color:#606366">46</div>
<div class="ln" style="left:56px;top:457.25px">44</div>
<div class="code" style="left:129px;top:457.25px">        <span class="kw">if</span> keystate[pygame.K_LEFT]:</div>
<div class="ln" style="left:17px;top:491.0px;color:#606366">47</div>
<div class="ln" style="left:56px;top:491.0px">45</div>
<div class="code" style="left:129px;top:491.0px">            self.speedx = -<span class="nu">5</span></div>
<div class="ln" style="left:17px;top:524.75px;color:#606366">48</div>
<div class="ln" style="left:56px;top:524.75px">46</div>
<div class="code" style="left:129px;top:524.75px">        <span class="kw">if</span> keystate[pygame.K_RIGHT]:</div>
<div class="ln" style="left:17px;top:558.5px;color:#606366">49</div>
<div class="ln" style="left:56px;top:558.5px">47</div>
<div class="code" style="left:129px;top:558.5px">            self.speedx = <span class="nu">5</span></div>
<div class="ln" style="left:17px;top:592.25px;color:#606366">50</div>
<div class="ln" style="left:56px;top:592.25px">48</div>
<div class="code" style="left:129px;top:592.25px">        self.rect.x += self.speedx</div>
<div class="ln" style="left:17px;top:626.0px;color:#606366">51</div>
<div class="ln" style="left:56px;top:626.0px">49</div>
<div class="code" style="left:129px;top:626.0px">        <span class="kw">if</span> self.rect.right &gt; SCREEN_WIDTH:</div>
<div class="ln" style="left:17px;top:659.75px;color:#606366">52</div>
<div class="ln" style="left:56px;top:659.75px">50</div>
<div class="code" style="left:129px;top:659.75px">            self.rect.right = SCREEN_WIDTH</div>
<div class="ln" style="left:17px;top:693.5px;color:#606366">53</div>
<div class="ln" style="left:56px;top:693.5px">51</div>
<div class="code" style="left:129px;top:693.5px">        <span class="kw">if</span> self.rect.left &lt; <span class="nu">0</span>:</div>
<svg style="left:112px;top:90.9px" width="16" height="18" viewBox="0 0 16 18"><path d="M0.5 17.5V7L8 0.5L15.5 7V17.500Z M4.500 10.500H11.500" fill="#2b2b2b" stroke="#606264" stroke-width="1"/></svg>
<svg style="left:112px;top:466.1px" width="16" height="18" viewBox="0 0 16 18"><path d="M0.5 0.5V11L8 17.500L15.500 11V0.500Z M4.500 7.500H11.500" fill="#2b2b2b" stroke="#606264" stroke-width="1"/></svg>
<svg style="left:112px;top:630.9px" width="16" height="18" viewBox="0 0 16 18"><path d="M0.5 17.5V7L8 0.5L15.5 7V17.500Z M4.500 10.500H11.500" fill="#2b2b2b" stroke="#606264" stroke-width="1"/></svg>
<div class="abs" style="left:917px;top:124px;width:10px;height:82px;background:#4f4f4f;"></div>
<div class="abs" style="left:912px;top:152px;width:17px;height:4px;background:#6e7780;"></div>
<div class="abs" style="left:912px;top:215px;width:17px;height:20px;background:#69717b;"></div>
<div class="abs" style="left:912px;top:635px;width:17px;height:3px;background:#69707a;"></div>
<div class="abs" style="left:912px;top:639px;width:17px;height:2.5px;background:#49824f;"></div>
<div class="abs" style="left:912px;top:666px;width:17px;height:4px;background:#69717b;"></div>
<div class="abs" style="left:130px;top:712.2px;width:454px;height:9.8px;background:rgba(128,128,128,0.42);"></div>
</div>
<div class="abs" style="left:1268px;top:105px;width:626px;height:1px;background:#323232;"></div>
<div class="t" style="left:1275px;top:80px;font-size:15px;color:#bbbbbb">通义灵码</div>
<svg style="left:1696.5px;top:78.7px" width="20" height="20" viewBox="0 0 20 20"><path d="M2.900 6.700A8.400 8.400 0 1 1 2.400 11.300" fill="none" stroke="#afb1b3" stroke-width="1.900"/><path d="M0.900 1.800V7.600H6.700" fill="none" stroke="#afb1b3" stroke-width="1.900"/><path d="M10 5.300V10.800L13.300 12.600" fill="none" stroke="#afb1b3" stroke-width="1.900"/></svg>
<svg style="left:1729.5px;top:79px" width="20" height="19" viewBox="0 0 20 19"><path d="M9.500 2.200H1.400V17.200H16.400V9.500" fill="none" stroke="#afb1b3" stroke-width="1.900"/><path d="M6.300 12.800L7.200 9.300L14.500 2L17.200 4.700L9.900 12Z" fill="none" stroke="#afb1b3" stroke-width="1.700" stroke-linejoin="round"/></svg>
<svg style="left:1761px;top:78.3px" width="21" height="21" viewBox="0 0 21 21"><circle cx="10.200" cy="10.200" r="9.200" fill="none" stroke="#afb1b3" stroke-width="1.900"/><text x="6.300" y="15.200" font-family="Liberation Sans,sans-serif" font-weight="bold" font-size="13.500" fill="#afb1b3">?</text></svg>
<svg style="left:1793px;top:78.9px" width="21" height="20" viewBox="0 0 21 20"><path d="M-2.300 -5.200V-0.800A2.300 2.300 0 0 0 2.300 -0.800V-5.200A5.700 5.700 0 0 1 2 5.300V16.800H-2V5.300A5.700 5.700 0 0 1 -2.300 -5.200Z" fill="none" stroke="#afb1b3" stroke-width="1.800" stroke-linejoin="round" transform="translate(7.200,6.800) rotate(-45)"/></svg>
<div class="abs" style="left:1824px;top:77px;width:1px;height:24px;background:#555759;"></div>
<svg style="left:1837.2px;top:81.3px" width="15.6" height="15.6" viewBox="0 0 15.6 15.6"><path d="M5.59 2.22L5.78 0.27L9.82 0.27L10.01 2.22L11.53 3.09L13.32 2.28L15.33 5.78L13.74 6.92L13.74 8.68L15.33 9.82L13.32 13.32L11.53 12.51L10.01 13.38L9.82 15.33L5.78 15.33L5.59 13.38L4.07 12.51L2.28 13.32L0.27 9.82L1.86 8.68L1.86 6.92L0.27 5.78L2.28 2.28L4.07 3.09ZM5.03 7.80a2.7689999999999997 2.7689999999999997 0 1 0 5.537999999999999 0a2.7689999999999997 2.7689999999999997 0 1 0 -5.537999999999999 0Z" fill="#afb1b3" fill-rule="evenodd" stroke="#afb1b3" stroke-width="0.6" stroke-linejoin="round"/></svg>
<svg style="left:1870.2px;top:87.7px" width="15.6" height="2" viewBox="0 0 15.6 2"><rect width="15.6" height="2" fill="#afb1b3"/></svg>
<div class="abs" style="left:1268px;top:155.5px;width:626px;height:1px;background:#2f3133;"></div>
<div class="t" style="left:1283px;top:123px;font-size:15px;color:#bbbbbb">智能问答</div>
<div class="t" style="left:1383px;top:123px;font-size:15px;color:#d8d8d8">AI 程序员</div>
<div class="abs" style="left:1382px;top:153.8px;width:64px;height:2.2px;background:#4a88c7;"></div>
<svg style="left:1676px;top:121px" width="22" height="22" viewBox="0 0 22 22"><circle cx="11" cy="11" r="9.6" fill="none" stroke="#afb1b3" stroke-width="1.6"/><path d="M11 6V16M6 11H16" stroke="#afb1b3" stroke-width="1.6"/></svg>
<div class="abs" style="left:1717px;top:121px;width:2px;height:22px;background:#2b2d2e;"></div>
<svg style="left:1746px;top:121px" width="20" height="22" viewBox="0 0 20 22"><circle cx="10" cy="6.5" r="4.6" fill="none" stroke="#bbbbbb" stroke-width="1.7"/><path d="M1.5 21V19Q1.5 13.5 10 13.5T18.500 19V21" fill="none" stroke="#bbbbbb" stroke-width="1.7"/></svg>
<div class="t" style="left:1774px;top:123px;font-size:15px;color:#bbbbbb">北京宏哥</div>
<svg style="left:1851px;top:128px" width="12" height="7" viewBox="0 0 12 7"><path d="M0 0H12L6.0 7Z" fill="#afb1b3"/></svg>
<div class="abs" style="left:1268px;top:156px;width:626px;height:519px;overflow:hidden">
<div class="abs" style="left:14px;top:-10px;width:579px;height:95px;background:#343638;border-radius:10px"></div>
<div class="abs" style="left:29px;top:9px;width:26px;height:26px;border-radius:13px;background:#f29a2e"></div>
<div class="t" style="left:34px;top:13px;font-size:15px;color:#fff;line-height:20px"><b>北</b></div>
<div class="t" style="left:64px;top:13px;font-size:15px;color:#bbbbbb">北京宏哥</div>
<div class="t" style="left:505px;top:13px;font-size:15px;color:#7d7f81">今天 09:04</div>
<div class="t" style="left:30px;top:49px;font-size:16px;color:#c4c4c4">一条生命结束并重新开始时，要有5秒的无敌时间</div>
<div class="abs" style="left:14px;top:97px;width:579px;height:460px;background:#343638;border-radius:10px"></div>
<svg style="left:29.799999999999955px;top:108.89999999999998px" width="25" height="25" viewBox="0 0 25 25"><defs><linearGradient id="lgm29_108" x1="0.7" y1="0" x2="0.3" y2="1"><stop offset="0" stop-color="#8d8cf8"/><stop offset="0.45" stop-color="#6a52f4"/><stop offset="1" stop-color="#6a35ee"/></linearGradient></defs><polygon points="8.75 0.3 13.75 0.3 15.3 3.4 22.2 3.4 23.75 6.5 21.9 10 25 15 22.8 18.1 19 18.1 16.25 24.4 12.5 24.4 10.3 21.5 3.75 21.5 1.5 18.1 3.4 14.4 0.3 9.4 2.2 6.5 5.9 6.5" fill="url(#lgm29_108)"/><path d="M3.4 7.9H22M4.2 8.3L12.9 23M21.6 12.4L13 23M10.6 2.5L7.5 7.8M17.6 8L23.2 14.4M5.3 20H10.9" fill="none" stroke-width="1.9" stroke="#ffffff"/></svg>
<div class="t" style="left:61px;top:113px;font-size:15px;color:#d4d4d4">通义灵码</div>
<div class="t" style="left:134px;top:113px;font-size:15px;color:#848688">@AI 程序员</div>
<svg style="left:467px;top:109.19999999999999px" width="18.5" height="20.5" viewBox="0 0 18.5 20.5"><path d="M5.500 0.900H11.500L17.300 6.500V16.100H5.500Z" fill="none" stroke="#bcbec0" stroke-width="1.700" stroke-linejoin="round"/><path d="M11.500 1V6.500H17.200" fill="none" stroke="#bcbec0" stroke-width="1.700"/><path d="M1 5V19.600H13" fill="none" stroke="#bcbec0" stroke-width="1.700"/></svg>
<svg style="left:511.20000000000005px;top:110.10000000000002px" width="19" height="19" viewBox="0 0 19 19"><path d="M0.900 8.900H4.400V18H0.900Z" fill="none" stroke="#bcbec0" stroke-width="1.700" stroke-linejoin="round"/><path d="M4.400 9.200L8.200 1.600Q8.900 0.400 9.900 1.600Q10.800 3 10.600 6.200H16.200Q18 6.400 17.700 8.200L16.200 16.200Q15.800 18 14 18H4.400" fill="none" stroke="#bcbec0" stroke-width="1.700" stroke-linejoin="round"/></svg>
<svg style="left:556.2px;top:110px" width="19" height="19" viewBox="0 0 19 19"><g transform="translate(0,19) scale(1,-1)"><path d="M0.900 8.900H4.400V18H0.900Z" fill="none" stroke="#bcbec0" stroke-width="1.700" stroke-linejoin="round"/><path d="M4.400 9.200L8.200 1.600Q8.900 0.400 9.900 1.600Q10.800 3 10.600 6.200H16.200Q18 6.400 17.700 8.200L16.200 16.200Q15.800 18 14 18H4.400" fill="none" stroke="#bcbec0" stroke-width="1.700" stroke-linejoin="round"/></g></svg>
<div class="t" style="left:30px;top:170px;font-size:16px;color:#c4c4c4">为了实现玩家在一条生命结束并重新开始时有5秒的无敌时间，我们需要在</div>
<div class="t" style="left:30px;top:199px;font-size:16px;color:#c4c4c4"><span class="oc">Player</span>类中添加一个无敌时间的属性，并在游戏循环中处理无敌时间的逻辑。</div>
<div class="t" style="left:30px;top:228px;font-size:16px;color:#c4c4c4">以下是修改后的代码：</div>
<div class="abs" style="left:30px;top:269px;width:548px;height:30px;background:#3c3f41;border-radius:6px"></div>
<svg style="left:44px;top:275px" width="17" height="20" viewBox="0 0 17 20"><path d="M5.5 0H12.4V18H0V5.5Z" fill="#87939b"/><path d="M0 5.500L5.500 0V5.500Z" fill="#3c3f41"/><path d="M0.300 4.500L4.500 0.300V4.500Z" fill="#7e8991"/><circle cx="10.5" cy="13" r="6.6" fill="#3c3f41"/><g transform="translate(5,7.5) scale(0.94)"><path d="M5.9 0C3.6 0 3.4 1 3.4 1.8V3.2H6.1V3.8H2C0.8 3.8 0 4.8 0 6.4S0.8 9 2 9H3V7.4C3 6.3 3.9 5.4 5 5.4H7.6C8.5 5.4 9.2 4.7 9.2 3.8V1.8C9.2 0.8 8.3 0 5.9 0Z" fill="#3b9fd6"/><path d="M6.1 12C8.4 12 8.6 11 8.6 10.2V8.8H5.9V8.2H10C11.2 8.2 12 7.2 12 5.6S11.2 3 10 3H9V4.6C9 5.7 8.1 6.6 7 6.6H4.4C3.5 6.6 2.8 7.3 2.8 8.2V10.2C2.8 11.2 3.7 12 6.1 12Z" fill="#f2c21b"/><circle cx="4.6" cy="1.7" r="0.6" fill="#3c3f41"/><circle cx="7.4" cy="10.3" r="0.6" fill="#3c3f41"/></g></svg>
<div class="t" style="left:69.3px;top:274px;letter-spacing:0.363px;font-size:16.5px;color:#c4c4c4">main.py</div>
<div class="t" style="left:441px;top:274px;font-size:15px;color:#7d7f81">3 / 3</div>
<svg style="left:494px;top:275.5px" width="17" height="17" viewBox="0 0 16 16"><circle cx="8" cy="8" r="7" fill="none" stroke="#4fa85a" stroke-width="1.5"/><path d="M4.6 8.2L7.2 10.6L11.4 5.8" fill="none" stroke="#4fa85a" stroke-width="1.5"/></svg>
<div class="t" style="left:518.5px;top:275px;font-size:15px;color:#8a8c8e">已接受</div>
<div class="t" style="left:30px;top:342px;font-size:18px;color:#d0d0d0;line-height:22px;height:22px"><b>修改说明：</b></div>
<div class="t" style="left:43px;top:388px;font-size:16px;color:#c4c4c4">1.</div>
<div class="t" style="left:43px;top:446px;font-size:16px;color:#c4c4c4">2.</div>
<div class="t" style="left:62px;top:388px;font-size:16px;color:#c4c4c4">在<span class="oc">Player</span>类中添加了<span class="oc">invulnerable</span>属性来表示玩家是否处于无敌状态，以</div>
<div class="t" style="left:62px;top:417px;font-size:16px;color:#c4c4c4">及<span class="oc">invulnerable_time</span>属性来记录无敌状态开始的时间。</div>
<div class="t" style="left:62px;top:446px;font-size:16px;color:#c4c4c4">在<span class="oc">Player</span>类的<span class="oc">update</span>方法中添加了无敌时间的处理逻辑，如果玩家处于无</div>
<div class="t" style="left:62px;top:475px;font-size:16px;color:#c4c4c4">敌状态，则检查当前时间是否超过无敌时间（5秒），如果超过则将无敌</div>
<div class="t" style="left:62px;top:504px;font-size:16px;color:#c4c4c4">状态设置为<span class="oc">False</span>。</div>
</div>
<div class="abs" style="left:1882px;top:545px;width:10px;height:101px;background:#565859;"></div>
<div class="abs" style="left:1282px;top:680px;width:597px;height:85px;background:#2b2b2c;border-radius:12px 12px 0 0"></div>
<div class="abs" style="left:1282px;top:720px;width:597px;height:1px;background:#3c3f41;"></div>
<svg style="left:1302px;top:696px" width="12" height="8" viewBox="0 0 12 8"><path d="M1 1L6 6.5L11 1" fill="none" stroke="#bbbbbb" stroke-width="1.6"/></svg>
<div class="t" style="left:1323px;top:691px;font-size:16px;color:#c8c8c8">工作区</div>
<div class="t" style="left:1385px;top:691px;font-size:14.5px;color:#bbbbbb">最新</div>
<svg style="left:1425px;top:696px" width="12" height="8" viewBox="0 0 12 8"><path d="M1 1L6 6.5L11 1" fill="none" stroke="#bbbbbb" stroke-width="1.6"/></svg>
<svg style="left:1796px;top:692px" width="16.5" height="16.5" viewBox="0 0 16 16"><circle cx="8" cy="8" r="7" fill="none" stroke="#4fa85a" stroke-width="1.5"/><path d="M4.6 8.2L7.2 10.6L11.4 5.8" fill="none" stroke="#4fa85a" stroke-width="1.5"/></svg>
<div class="t" style="left:1819px;top:691px;font-size:15px;color:#8a8c8e">已接受</div>
<svg style="left:1301px;top:732px" width="17" height="20" viewBox="0 0 17 20"><path d="M5.5 0H12.4V18H0V5.5Z" fill="#87939b"/><path d="M0 5.500L5.500 0V5.500Z" fill="#2b2b2c"/><path d="M0.300 4.500L4.500 0.300V4.500Z" fill="#7e8991"/><circle cx="10.5" cy="13" r="6.6" fill="#2b2b2c"/><g transform="translate(5,7.5) scale(0.94)"><path d="M5.9 0C3.6 0 3.4 1 3.4 1.8V3.2H6.1V3.8H2C0.8 3.8 0 4.8 0 6.4S0.8 9 2 9H3V7.4C3 6.3 3.9 5.4 5 5.4H7.6C8.5 5.4 9.2 4.7 9.2 3.8V1.8C9.2 0.8 8.3 0 5.9 0Z" fill="#3b9fd6"/><path d="M6.1 12C8.4 12 8.6 11 8.6 10.2V8.8H5.9V8.2H10C11.2 8.2 12 7.2 12 5.6S11.2 3 10 3H9V4.6C9 5.7 8.1 6.6 7 6.6H4.4C3.5 6.6 2.8 7.3 2.8 8.2V10.2C2.8 11.2 3.7 12 6.1 12Z" fill="#f2c21b"/><circle cx="4.6" cy="1.7" r="0.6" fill="#3c3f41"/><circle cx="7.4" cy="10.3" r="0.6" fill="#3c3f41"/></g></svg>
<div class="t" style="left:1327.3px;top:732px;letter-spacing:0.313px;font-size:16.5px;color:#c4c4c4">main.py</div>
<svg style="left:1796px;top:733px" width="16.5" height="16.5" viewBox="0 0 16 16"><circle cx="8" cy="8" r="7" fill="none" stroke="#4fa85a" stroke-width="1.5"/><path d="M4.6 8.2L7.2 10.6L11.4 5.8" fill="none" stroke="#4fa85a" stroke-width="1.5"/></svg>
<div class="t" style="left:1819px;top:732px;font-size:15px;color:#8a8c8e">已接受</div>
<div class="abs" style="left:1268px;top:764px;width:626px;height:1px;background:#323232;"></div>
<div class="abs" style="left:1282px;top:777px;width:597px;height:123px;background:#2b2b2c;border-radius:10px"></div>
<div class="abs" style="left:1298px;top:790px;width:24px;height:25px;background:#3c3f41;border-radius:4px"></div>
<svg style="left:1303px;top:796px" width="14" height="14" viewBox="0 0 14 14"><path d="M7 0V14M0 7H14" stroke="#9a9c9e" stroke-width="1.6"/></svg>
<div class="t" style="left:1327.5px;top:793px;font-size:17px;color:#bbbbbb;line-height:22px;height:22px">添加上下文</div>
<div class="t" style="left:1306px;top:838.5px;font-size:17px;color:#6c6e70;line-height:22px;height:22px">详细描述你的任务或者问题</div>
<div class="t" style="left:1300.3px;top:868px;letter-spacing:-0.143px;font-size:16.5px;color:#9a9c9e">qwen-2.5</div>
<svg style="left:1374.5px;top:875px" width="12" height="8" viewBox="0 0 12 8"><path d="M1 1L6 6.5L11 1" fill="none" stroke="#bbbbbb" stroke-width="1.6"/></svg>
<div class="abs" style="left:1894px;top:72px;width:26px;height:894px;background:#3c3f41;"></div>
<div class="abs" style="left:1893px;top:72px;width:1px;height:894px;background:#323232;"></div>
<svg style="left:1901px;top:84px" width="11" height="17" viewBox="0 0 11 17"><ellipse cx="5.5" cy="3" rx="5.5" ry="3" fill="#afb1b3"/><path d="M0 5.500Q5.500 9.500 11 5.500V8Q5.500 12 0 8Z M0 9.500Q5.500 13.500 11 9.500V12Q5.500 16 0 12Z M0 13.500Q5.500 17.500 11 13.500V14.500Q5.500 19 0 14.500Z" fill="#afb1b3"/></svg>
<div class="abs" style="left:1905.5px;top:134.5px;width:0;height:0"><div style="position:absolute;white-space:nowrap;transform:translate(-50%,-50%) rotate(90deg);font-size:14px;line-height:18px;color:#bbbbbb;">Database</div></div>
<svg style="left:1901px;top:192px" width="12" height="12" viewBox="0 0 12 12"><path d="M0 0H12V2.500H0Z M0 4H3V6H0Z M4.500 4H7.500V6H4.500Z M9 4H12V6H9Z M0 7H3V9H0Z M4.500 7H7.500V9H4.500Z M9 7H12V9H9Z M0 10H3V12H0Z M4.500 10H7.500V12H4.500Z M9 10H12V12H9Z" fill="#afb1b3"/></svg>
<div class="abs" style="left:1905.5px;top:234.5px;width:0;height:0"><div style="position:absolute;white-space:nowrap;transform:translate(-50%,-50%) rotate(90deg);font-size:14px;line-height:18px;color:#bbbbbb;">SciView</div></div>
<div class="abs" style="left:1894px;top:270px;width:26px;height:97px;background:#2b2d2e;"></div>
<svg style="left:1899.7px;top:284px" width="16.2" height="16.2" viewBox="0 0 25 25"><polygon points="8.75 0.3 13.75 0.3 15.3 3.4 22.2 3.4 23.75 6.5 21.9 10 25 15 22.8 18.1 19 18.1 16.25 24.4 12.5 24.4 10.3 21.5 3.75 21.5 1.5 18.1 3.4 14.4 0.3 9.4 2.2 6.5 5.9 6.5" fill="#c8c8c8"/><path d="M3.4 7.9H22M4.2 8.3L12.9 23M21.6 12.4L13 23M10.6 2.5L7.5 7.8M17.6 8L23.2 14.4M5.3 20H10.9" fill="none" stroke-width="1.9" stroke="#2b2d2e"/></svg>
<div class="abs" style="left:1905.3px;top:330.3px;width:0;height:0"><div style="position:absolute;white-space:nowrap;transform:translate(-50%,-50%) rotate(90deg);font-size:13px;line-height:18px;color:#e8e8e8;">通义灵码</div></div>
<div class="abs" style="left:27px;top:913px;width:1867px;height:53px;background:#3c3f41;"></div>
<div class="abs" style="left:27px;top:913px;width:1867px;height:1px;background:#323232;"></div>
<div class="t" style="left:34.4px;top:920px;letter-spacing:-0.556px;font-size:16.5px">Run:</div>
<svg style="left:92px;top:921px" width="18.0" height="18.0" viewBox="0 0 18.0 18.0"><g transform="scale(1.5)"><path d="M5.9 0C3.6 0 3.4 1 3.4 1.8V3.2H6.1V3.8H2C0.8 3.8 0 4.8 0 6.4S0.8 9 2 9H3V7.4C3 6.3 3.9 5.4 5 5.4H7.6C8.5 5.4 9.2 4.7 9.2 3.8V1.8C9.2 0.8 8.3 0 5.9 0Z" fill="#3e7896"/><path d="M6.1 12C8.4 12 8.6 11 8.6 10.2V8.8H5.9V8.2H10C11.2 8.2 12 7.2 12 5.6S11.2 3 10 3H9V4.6C9 5.7 8.1 6.6 7 6.6H4.4C3.5 6.6 2.8 7.3 2.8 8.2V10.2C2.8 11.2 3.7 12 6.1 12Z" fill="#a58728"/><circle cx="4.6" cy="1.7" r="0.6" fill="#3c3f41"/><circle cx="7.4" cy="10.3" r="0.6" fill="#3c3f41"/></g></svg>
<div class="t" style="left:115px;top:920px;letter-spacing:-0.146px;font-size:16.5px">main (2)</div>
<svg style="left:183px;top:926px" width="10" height="10" viewBox="0 0 10 10"><path d="M0.5 0.5L9.5 9.5M9.5 0.5L0.5 9.5" stroke="#6e7073" stroke-width="1.3"/></svg>
<div class="abs" style="left:76px;top:943.2px;width:131px;height:3.8px;background:#7d8287;"></div>
<div class="abs" style="left:99.4px;top:947.2px;width:1794.6px;height:19px;background:#2b2b2b;"></div>
<div class="t" style="left:40.8px;top:943px;font-size:16.5px;color:#afb1b3">»</div>
<div class="t" style="left:76.8px;top:943px;font-size:16.5px;color:#afb1b3">»</div>
<div class="abs" style="left:62px;top:947px;width:1px;height:19px;background:#323232;"></div>
<div class="abs" style="left:0px;top:966px;width:1920px;height:54px;background:#3c3f41;"></div>
<div class="abs" style="left:0px;top:966px;width:1920px;height:1px;background:#323232;"></div>
<div class="abs" style="left:174px;top:967px;width:67px;height:27px;background:#2b2d2e;"></div>
<svg style="left:42px;top:974px" width="11" height="15" viewBox="0 0 11 15"><circle cx="2.5" cy="2.500" r="2" fill="#afb1b3"/><circle cx="2.5" cy="12.500" r="2" fill="#afb1b3"/><circle cx="8.500" cy="4.500" r="2" fill="#afb1b3"/><path d="M2.500 2.500V12.500M8.500 4.500Q8.500 8.500 2.500 9.500" stroke="#afb1b3" stroke-width="1.500" fill="none"/></svg>
<div class="t" style="left:63.25px;top:973px;letter-spacing:-0.008px;font-size:14px;">Version Control</div>
<svg style="left:187px;top:975px" width="11" height="13" viewBox="0 0 11 13"><path d="M0 0L11 6.500L0 13Z" fill="#c4c6c7"/></svg>
<div class="t" style="left:205.5px;top:973px;letter-spacing:-0.573px;font-size:14px;color:#ffffff">Run</div>
<svg style="left:256px;top:976px" width="13" height="11" viewBox="0 0 13 11"><path d="M0 0H2V2H0Z M3.500 0H13V2H3.500Z M0 4.500H2V6.500H0Z M3.500 4.500H13V6.500H3.500Z M0 9H2V11H0Z M3.500 9H13V11H3.500Z" fill="#afb1b3"/></svg>
<div class="t" style="left:275px;top:973px;letter-spacing:-0.683px;font-size:14px;">TODO</div>
<svg style="left:340px;top:975px" width="13" height="13" viewBox="0 0 13 13"><circle cx="6.500" cy="6.500" r="6.500" fill="#afb1b3"/><rect x="5.600" y="2.800" width="1.800" height="5" fill="#3c3f41"/><rect x="5.600" y="8.800" width="1.800" height="1.800" fill="#3c3f41"/></svg>
<div class="t" style="left:359.75px;top:973px;letter-spacing:-0.304px;font-size:14px;">Problems</div>
<svg style="left:445px;top:975px" width="14" height="13" viewBox="0 0 14 13"><rect width="14" height="13" rx="1" fill="#afb1b3"/><path d="M2.500 3.500L6 6.500L2.500 9.500" stroke="#3c3f41" stroke-width="1.500" fill="none"/><path d="M7 10H11.500" stroke="#3c3f41" stroke-width="1.400"/></svg>
<div class="t" style="left:465.5px;top:973px;letter-spacing:-0.185px;font-size:14px;">Terminal</div>
<svg style="left:545px;top:974px" width="15" height="15" viewBox="0 0 15 15"><path d="M7.500 0L15 3.800L7.500 7.600L0 3.800Z" fill="#afb1b3"/><path d="M0.500 7L7.500 10.600L14.500 7M0.500 10.500L7.500 14.100L14.500 10.500" stroke="#afb1b3" stroke-width="1.600" fill="none"/></svg>
<div class="t" style="left:565px;top:973px;letter-spacing:-0.211px;font-size:14px;">Python Packages</div>
<svg style="left:703px;top:974px" width="15.0" height="15.0" viewBox="0 0 15.0 15.0"><g transform="scale(1.25)"><path d="M5.9 0C3.6 0 3.4 1 3.4 1.8V3.2H6.1V3.8H2C0.8 3.8 0 4.8 0 6.4S0.8 9 2 9H3V7.4C3 6.3 3.9 5.4 5 5.4H7.6C8.5 5.4 9.2 4.7 9.2 3.8V1.8C9.2 0.8 8.3 0 5.9 0Z" fill="#afb1b3"/><path d="M6.1 12C8.4 12 8.6 11 8.6 10.2V8.8H5.9V8.2H10C11.2 8.2 12 7.2 12 5.6S11.2 3 10 3H9V4.6C9 5.7 8.1 6.6 7 6.6H4.4C3.5 6.6 2.8 7.3 2.8 8.2V10.2C2.8 11.2 3.7 12 6.1 12Z" fill="#9a9c9e"/><circle cx="4.6" cy="1.7" r="0.6" fill="#3c3f41"/><circle cx="7.4" cy="10.3" r="0.6" fill="#3c3f41"/></g></svg>
<div class="t" style="left:723px;top:973px;letter-spacing:-0.081px;font-size:14px;">Python Console</div>
<div class="abs" style="left:1799px;top:974px;width:16px;height:16px;border-radius:8px 8px 0 8px;background:#f0a732"></div>
<div class="t" style="left:1803.8px;top:972px;font-size:11.5px;color:#3c3f41"><b>5</b></div>
<div class="t" style="left:1819.5px;top:973px;letter-spacing:-0.17px;font-size:14px;">Event Log</div>
<div class="abs" style="left:0px;top:994px;width:1920px;height:1px;background:#4b4d4f;"></div>
<svg style="left:7px;top:1000px" width="16" height="16" viewBox="0 0 16 16"><rect x="3.800" y="1.100" width="11.300" height="11.300" fill="none" stroke="#a8aaac" stroke-width="1.400"/><path d="M0.700 4V14.900H12.500" fill="none" stroke="#7c7e80" stroke-width="1.400"/></svg>
<div class="t" style="left:33.5px;top:997px;letter-spacing:0.023px;font-size:16.4px">License expired: Your PyCharm subscription expired on 2023/12/31.If you don't renew it before 2297/10/15, you will no longer be able to use the product. // Renew License &nbsp; Fallback Options (3 minutes ago)</div>
<div class="t" style="left:1739.0px;top:997px;transform:scaleX(0.9124);transform-origin:0 0;font-size:16.4px">40:1</div>
<div class="t" style="left:1785px;top:997px;letter-spacing:-0.187px;font-size:16.4px">Python 3.10</div>
<svg style="left:1885px;top:998px" width="21" height="21" viewBox="0 0 25 25"><defs><linearGradient id="lgm1885_998" x1="0.7" y1="0" x2="0.3" y2="1"><stop offset="0" stop-color="#8d8cf8"/><stop offset="0.45" stop-color="#6a52f4"/><stop offset="1" stop-color="#6a35ee"/></linearGradient></defs><polygon points="8.75 0.3 13.75 0.3 15.3 3.4 22.2 3.4 23.75 6.5 21.9 10 25 15 22.8 18.1 19 18.1 16.25 24.4 12.5 24.4 10.3 21.5 3.75 21.5 1.5 18.1 3.4 14.4 0.3 9.4 2.2 6.5 5.9 6.5" fill="url(#lgm1885_998)"/><path d="M3.4 7.9H22M4.2 8.3L12.9 23M21.6 12.4L13 23M10.6 2.5L7.5 7.8M17.6 8L23.2 14.4M5.3 20H10.9" fill="none" stroke-width="1.9" stroke="#ffffff"/></svg>
<div class="abs" style="left:1464px;top:861px;width:422px;height:95px;background:#4e5052;border:1px solid #5f6163"></div>
<svg style="left:1477px;top:872px" width="18" height="16" viewBox="0 0 18 16"><path d="M9 0.500L17.500 15.500H0.500Z" fill="#f0a732"/><rect x="8" y="5.500" width="2" height="5.500" fill="#4e5052"/><rect x="8" y="12" width="2" height="2" fill="#4e5052"/></svg>
<div class="t" style="left:1503.5px;top:871px;letter-spacing:-0.014px;font-size:15.5px;color:#d8d8d8"><b>License expired</b></div>
<div class="t" style="left:1504px;top:895px;letter-spacing:-0.082px;font-size:16.5px;color:#c0c0c0">Your PyCharm subscription expired on...</div>
<svg style="left:1859px;top:903px" width="12" height="8" viewBox="0 0 12 8"><path d="M1 1L6 6.5L11 1" fill="none" stroke="#6e7073" stroke-width="1.6"/></svg>
<div class="t" style="left:1503px;top:925px;letter-spacing:-0.387px;font-size:16.5px;color:#589df6">Renew License</div>
<div class="t" style="left:1630px;top:925px;letter-spacing:-0.109px;font-size:16.5px;color:#589df6">Fallback Options</div>
<div class="abs" style="left:0px;top:35px;width:1920px;height:1px;background:#555759;"></div>
<svg style="left:8.75px;top:7.75px" width="20.5" height="20.5" viewBox="0 0 20.5 20.5"><defs><linearGradient id="lg1" x1="0" y1="0.2" x2="1" y2="0.8"><stop offset="0" stop-color="#21d789"/><stop offset="0.55" stop-color="#e8f04a"/><stop offset="1" stop-color="#07c3f2"/></linearGradient></defs><path d="M2 3L13 0L20.5 7L18 17.5L8 20.5L0 14Z" fill="url(#lg1)"/><rect x="4.2" y="4.2" width="12" height="12" fill="#000"/><text x="5.2" y="10.6" font-family="Liberation Sans,sans-serif" font-weight="bold" font-size="6.6" fill="#fff">PC</text><rect x="5.5" y="13.4" width="4.5" height="1.1" fill="#fff"/></svg>
<div class="t" style="left:43px;top:8px;letter-spacing:-0.22px;font-size:16.5px"><u>F</u>ile</div>
<div class="t" style="left:84px;top:8px;letter-spacing:0.051px;font-size:16.5px"><u>E</u>dit</div>
<div class="t" style="left:128.75px;top:8px;letter-spacing:-0.017px;font-size:16.5px"><u>V</u>iew</div>
<div class="t" style="left:179px;top:8px;letter-spacing:0.079px;font-size:16.5px"><u>N</u>avigate</div>
<div class="t" style="left:260.75px;top:8px;letter-spacing:-0.173px;font-size:16.5px"><u>C</u>ode</div>
<div class="t" style="left:314px;top:8px;letter-spacing:0.019px;font-size:16.5px"><u>R</u>efactor</div>
<div class="t" style="left:393.55px;top:8px;transform:scaleX(0.9453);transform-origin:0 0;font-size:16.5px">R<u>u</u>n</div>
<div class="t" style="left:437px;top:8px;letter-spacing:0.683px;font-size:16.5px"><u>T</u>ools</div>
<div class="t" style="left:494.0px;top:8px;transform:scaleX(0.8402);transform-origin:0 0;font-size:16.5px">VC<u>S</u></div>
<div class="t" style="left:538px;top:8px;letter-spacing:0.246px;font-size:16.5px"><u>W</u>indow</div>
<div class="t" style="left:613px;top:8px;letter-spacing:0.581px;font-size:16.5px"><u>H</u>elp</div>
<div class="t" style="left:682.5px;top:8px;letter-spacing:-0.067px;font-size:16.5px;color:#8f9193">Demo [D:\Demo] - main.py</div>
<svg style="left:1767.6px;top:18px" width="12.7" height="1" viewBox="0 0 12.7 1"><rect width="12.700" height="1" fill="#aaacad"/></svg>
<svg style="left:1826.7px;top:11.7px" width="12.5" height="12.3" viewBox="0 0 12.5 12.3"><path d="M0.500 3H9.500V11.800H0.500Z" fill="none" stroke="#aaacad" stroke-width="1"/><path d="M3 3V0.500H12V9.300H9.500" fill="none" stroke="#aaacad" stroke-width="1"/></svg>
<svg style="left:1884.8px;top:12px" width="12.2" height="11.9" viewBox="0 0 12.2 11.9"><path d="M0.300 0.300L11.900 11.600M11.900 0.300L0.300 11.600" fill="none" stroke="#c0c2c3" stroke-width="1.100"/></svg>
<div class="abs" style="left:0px;top:71px;width:1920px;height:1px;background:#323232;"></div>
<svg style="left:11.5px;top:43.5px" width="21" height="20" viewBox="0 0 21 20"><path d="M0.300 11.800H5.400V8.200L10.900 13.100L5.400 18.400V14.400H0.300Z" fill="#3a9fd5"/><path d="M18.700 4.150H13.300V0.300L8.100 5.800L13.300 10.700V6.700H18.700Z" fill="#3a9fd5"/></svg>
<div class="t" style="left:34.6px;top:43px;letter-spacing:-0.204px;font-size:16.5px">main.py</div>
<svg style="left:1450px;top:45.5px" width="18" height="16" viewBox="0 0 18 16"><circle cx="13.3" cy="4.3" r="3.4" fill="#9a9c9e"/><path d="M12 9H15Q18 10 18 13.5H12Z" fill="#9a9c9e"/><circle cx="8" cy="4.6" r="4.3" fill="#b4b6b8" stroke="#3c3f41" stroke-width="0.8"/><path d="M0 15.5Q0 10 5 9.2L8 10.500L11 9.2Q16 10 16 15.500Z" fill="#b4b6b8"/></svg>
<svg style="left:1471px;top:52.7px" width="10" height="5.3" viewBox="0 0 10 5.3"><path d="M0 0H10L5.0 5.3Z" fill="#afb1b3"/></svg>
<div class="abs" style="left:1491px;top:43px;width:1px;height:22px;background:#555759;"></div>
<div class="abs" style="left:1504px;top:41px;width:126px;height:27px;border:1px solid #646668;border-radius:4px"></div>
<svg style="left:1516px;top:45.2px" width="17.8" height="17.8" viewBox="0 0 17.759999999999998 17.759999999999998"><g transform="scale(1.48)"><path d="M5.9 0C3.6 0 3.4 1 3.4 1.8V3.2H6.1V3.8H2C0.8 3.8 0 4.8 0 6.4S0.8 9 2 9H3V7.4C3 6.3 3.9 5.4 5 5.4H7.6C8.5 5.4 9.2 4.7 9.2 3.8V1.8C9.2 0.8 8.3 0 5.9 0Z" fill="#366078"/><path d="M6.1 12C8.4 12 8.6 11 8.6 10.2V8.8H5.9V8.2H10C11.2 8.2 12 7.2 12 5.6S11.2 3 10 3H9V4.6C9 5.7 8.1 6.6 7 6.6H4.4C3.5 6.6 2.8 7.3 2.8 8.2V10.2C2.8 11.2 3.7 12 6.1 12Z" fill="#8c732d"/><circle cx="4.6" cy="1.7" r="0.6" fill="#3c3f41"/><circle cx="7.4" cy="10.3" r="0.6" fill="#3c3f41"/></g></svg>
<div class="t" style="left:1539.3px;top:44px;letter-spacing:-0.246px;font-size:16.5px">main (2)</div>
<svg style="left:1607px;top:50.7px" width="11" height="7" viewBox="0 0 11 7"><path d="M0 0H11L5.5 7Z" fill="#9a9c9e"/></svg>
<svg style="left:1647.7px;top:46.7px" width="13" height="15" viewBox="0 0 13 15"><path d="M0 0L12.5 7.5L0 15Z" fill="#499c54"/></svg>
<svg style="left:1677px;top:45.4px" width="16" height="17" viewBox="0 0 16 17"><path d="M4.300 0.300L6.600 3.300M11.700 0.300L9.400 3.300" stroke="#499c54" stroke-width="1.700" fill="none"/><path d="M4.300 5.200A3.700 3.200 0 0 1 11.700 5.200Z" fill="#499c54"/><rect x="3" y="5.800" width="10" height="11" rx="4.200" fill="#499c54"/><path d="M0.300 7.300H3.500M12.500 7.300H15.700M0 11H3.500M12.500 11H16M0.800 15.300L3.800 14M15.200 15.300L12.200 14" stroke="#499c54" stroke-width="2.200" fill="none"/><path d="M5.200 9.300H10.800M5.200 12.800H10.800" stroke="#3c3f41" stroke-width="1.400"/></svg>
<svg style="left:1708.7px;top:47.2px" width="20" height="17" viewBox="0 0 20 17"><path d="M0 0.500H13.500V7.500Q13.500 12 6.750 14.500Q0 12 0 7.500Z" fill="#afb1b3"/><path d="M6.750 2.500V12.300Q11.500 10.500 11.500 7.500V2.500Z" fill="#3c3f41"/><path d="M9 4.500L20 11L9 17Z" fill="#3c3f41"/><path d="M10.500 6.200L19.300 11.200L10.500 16.500Z" fill="#499c54"/></svg>
<svg style="left:1739px;top:45.4px" width="20" height="19" viewBox="0 0 20 19"><circle cx="7.700" cy="7.700" r="6.800" fill="none" stroke="#afb1b3" stroke-width="1.700"/><path d="M7.700 3.500V8.200L5 10" stroke="#afb1b3" stroke-width="1.600" fill="none"/><path d="M8.200 6L20 13L8.200 19Z" fill="#3c3f41"/><path d="M9.900 8L18.800 13L9.900 18.300Z" fill="#499c54"/></svg>
<svg style="left:1766.3px;top:52.9px" width="10" height="5.4" viewBox="0 0 10 5.4"><path d="M0 0H10L5.0 5.4Z" fill="#afb1b3"/></svg>
<div class="abs" style="left:1790px;top:47.5px;width:12.3px;height:12.5px;background:#5c5c5c;"></div>
<div class="abs" style="left:1817px;top:43px;width:1px;height:22px;background:#555759;"></div>
<svg style="left:1829px;top:45.4px" width="19" height="18" viewBox="0 0 19 18"><circle cx="7.300" cy="7.300" r="5.900" fill="none" stroke="#c0c2c3" stroke-width="2.300"/><path d="M11.600 11.600L17.200 16.800" stroke="#c0c2c3" stroke-width="2.700"/></svg>
<svg style="left:1861.8px;top:46px" width="16.4" height="16.4" viewBox="0 0 16.4 16.4"><path d="M5.88 2.33L6.08 0.28L10.32 0.28L10.52 2.33L12.12 3.25L14.00 2.40L16.12 6.08L14.45 7.28L14.45 9.12L16.12 10.32L14.00 14.00L12.12 13.15L10.52 14.07L10.32 16.12L6.08 16.12L5.88 14.07L4.28 13.15L2.40 14.00L0.28 10.32L1.95 9.12L1.95 7.28L0.28 6.08L2.40 2.40L4.28 3.25ZM5.29 8.20a2.9109999999999996 2.9109999999999996 0 1 0 5.821999999999999 0a2.9109999999999996 2.9109999999999996 0 1 0 -5.821999999999999 0Z" fill="#c0c2c3" fill-rule="evenodd" stroke="#c0c2c3" stroke-width="0.6" stroke-linejoin="round"/></svg>
<svg style="left:1894px;top:45px" width="18" height="18" viewBox="0 0 18 18"><defs><linearGradient id="lg2" x1="0" y1="0" x2="1" y2="0"><stop offset="0" stop-color="#e6ee45"/><stop offset="0.3" stop-color="#4fdc7a"/><stop offset="0.65" stop-color="#17b8c8"/><stop offset="1" stop-color="#1b56d8"/></linearGradient></defs><path d="M1.500 1.500Q3 -0.300 5.500 0.800L16.500 7Q18.500 9 16.500 11L5.500 17.200Q3 18.300 1.500 16.500Q4 9 1.500 1.500Z" fill="url(#lg2)"/><path d="M10 3.400L16.500 7Q18.500 9 16.500 11L12 13.500Q14.500 9 10 3.400Z" fill="#1a4fc8"/><path d="M1.500 1.500Q4 9 1.500 16.500Q0.500 9 1.500 1.500Z" fill="#f0f060"/></svg>
</body></html>
